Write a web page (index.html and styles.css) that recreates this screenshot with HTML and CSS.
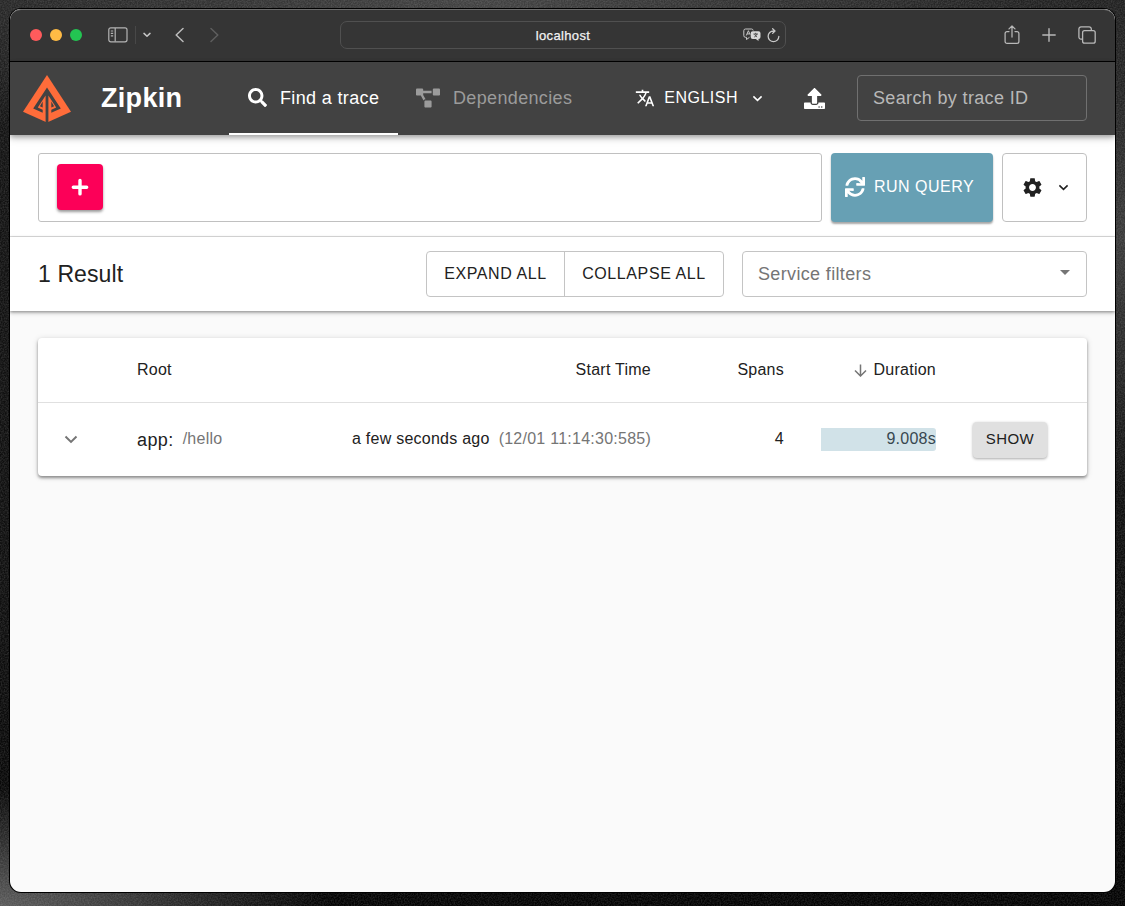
FILE: index.html
```html
<!DOCTYPE html>
<html lang="en">
<head>
    <meta charset="UTF-8">
    <meta name="viewport" content="width=device-width, initial-scale=1.0">
    <title>Zipkin</title>
    <link rel="stylesheet" href="styles.css">
</head>
<body>
    <!-- Desktop grain -->
    <svg class="grain" width="1125" height="906" aria-hidden="true">
        <filter id="noise" color-interpolation-filters="sRGB">
            <feTurbulence type="fractalNoise" baseFrequency="0.7" numOctaves="2"/>
            <feColorMatrix values="0 0 0 0 1  0 0 0 0 1  0 0 0 0 1  1 0 0 0 -0.3"/>
        </filter>
        <rect width="1125" height="906" filter="url(#noise)"/>
    </svg>

    <div class="window">
        <!-- Browser toolbar -->
        <div class="toolbar">
            <div class="toolbar-left">
                <span class="dot red"></span>
                <span class="dot yellow"></span>
                <span class="dot green"></span>
                <svg class="sidebar-icon" width="20" height="16" viewBox="0 0 20 16" fill="none" stroke="#b4b4b4" stroke-width="1.2">
                    <rect x="0.8" y="0.8" width="18.2" height="14" rx="2"/>
                    <path d="M7.2 1v13.6M2.8 4h2.4M2.8 6.4h2.4M2.8 8.8h2.4"/>
                </svg>
                <span class="divider"></span>
                <svg class="mini-chevron" width="8" height="6" viewBox="0 0 8 6" fill="none" stroke="#c4c4c4" stroke-width="1.5" stroke-linecap="round" stroke-linejoin="round">
                    <path d="M1 1.4l3 2.8 3-2.8"/>
                </svg>
                <svg class="back" width="9" height="16" viewBox="0 0 9 16" fill="none" stroke="#bcbcbc" stroke-width="1.5" stroke-linecap="round" stroke-linejoin="round">
                    <path d="M8 1.5L1.2 8 8 14.5"/>
                </svg>
                <svg class="forward" width="9" height="16" viewBox="0 0 9 16" fill="none" stroke="#5e5e5e" stroke-width="1.5" stroke-linecap="round" stroke-linejoin="round">
                    <path d="M1 1.5L7.8 8 1 14.5"/>
                </svg>
            </div>
            <div class="address">
                <span>localhost</span>
                <div class="address-icons">
                    <svg width="18" height="14" viewBox="0 0 18 14" fill="none">
                        <path d="M2.5 1h6a1.8 1.8 0 0 1 1.7 1.5M6.5 9.3L3.5 11.5V9.3h-1A1.7 1.7 0 0 1 .8 7.6V2.7A1.7 1.7 0 0 1 2.5 1" stroke="#c8c8c8"/>
                        <path d="M3.3 7.5l2.1-4.8 1.7 3.8M4 5.9h2.8" stroke="#c8c8c8"/>
                        <path d="M9.7 3.2h5.8a2 2 0 0 1 2 2v3.7a2 2 0 0 1-2 2v2.2l-2.7-2.2H9.7a2 2 0 0 1-2-2V5.2a2 2 0 0 1 2-2z" fill="#d8d8d8"/>
                        <path d="M10.4 6h4.6M12.7 4.8v1.2M11.2 9c1.6-.7 2.4-1.7 2.6-3M11.6 6.2c.5 1.4 1.5 2.3 2.5 2.8" stroke="#3a3a3a" stroke-width=".8"/>
                    </svg>
                    <svg width="13" height="15" viewBox="0 0 12 14" fill="none" stroke="#c8c8c8" stroke-width="1.2" stroke-linecap="round" stroke-linejoin="round">
                        <path d="M11 7.8a5 5 0 1 1-5-5h1M5.2.7l2.2 2.1-2.2 2.2"/>
                    </svg>
                </div>
            </div>
            <div class="toolbar-right">
                <svg width="16" height="20" viewBox="0 0 16 20" fill="none" stroke="#b8b8b8" stroke-width="1.25" stroke-linecap="round" stroke-linejoin="round">
                    <path d="M5 6.6H3A1.9 1.9 0 0 0 1.1 8.5v8A1.9 1.9 0 0 0 3 18.4h10a1.9 1.9 0 0 0 1.9-1.9v-8A1.9 1.9 0 0 0 13 6.6h-2M8 12V1.2M5 3.9l3-2.9 3 2.9"/>
                </svg>
                <svg width="14" height="14" viewBox="0 0 14 14" fill="none" stroke="#b8b8b8" stroke-width="1.4" stroke-linecap="round">
                    <path d="M7 .8v12.4M.8 7h12.4"/>
                </svg>
                <svg width="18" height="18" viewBox="0 0 18 18" fill="none" stroke="#b8b8b8" stroke-width="1.3">
                    <rect x="4.6" y="4.6" width="12.6" height="12.6" rx="2"/>
                    <path d="M4.6 13.2H3a2.1 2.1 0 0 1-2.1-2.1V3A2.1 2.1 0 0 1 3 .9h8.2a2.1 2.1 0 0 1 2.1 2.1v1.6"/>
                </svg>
            </div>
        </div>

        <!-- App bar -->
        <header class="app-bar">
            <svg class="logo" width="48" height="48" viewBox="0 0 48 48">
                <path fill="#ff6c3a" d="M24 0l24 36.800L24 47.500 0 36.800z"/>
                <path fill="#424242" d="M24 12.400L37.800 33.600 28.300 37.800V34.800L33.200 32.400 25.400 20.500V48h-2.800V20.500L14.800 32.400l4.900 2.400v3L10.200 33.600z"/>
                <path fill="#424242" d="M19.700 26.500V32.600L16.900 31.200zM28.300 26.500V32.600l2.800-1.400z"/>
            </svg>
            <h1 class="brand">Zipkin</h1>
            <nav class="tabs">
                <a class="tab active" href="#">
                    <svg width="19" height="19" viewBox="0 0 512 512" fill="currentColor"><path d="M505 442.700L405.300 343c-4.500-4.500-10.600-7-17-7H372c27.600-35.300 44-79.700 44-128C416 93.100 322.900 0 208 0S0 93.100 0 208s93.100 208 208 208c48.300 0 92.700-16.400 128-44v16.300c0 6.400 2.500 12.500 7 17l99.700 99.700c9.400 9.400 24.600 9.400 33.900 0l28.300-28.300c9.400-9.400 9.400-24.600.1-34zM208 336c-70.700 0-128-57.200-128-128 0-70.700 57.200-128 128-128 70.700 0 128 57.200 128 128 0 70.700-57.200 128-128 128z"/></svg>
                    <span>Find a trace</span>
                </a>
                <a class="tab" href="#">
                    <svg width="24" height="20" viewBox="0 0 640 512" fill="currentColor"><path d="M384 320H256c-17.670 0-32 14.330-32 32v128c0 17.670 14.330 32 32 32h128c17.670 0 32-14.330 32-32V352c0-17.670-14.330-32-32-32zM192 32c0-17.670-14.330-32-32-32H32C14.330 0 0 14.330 0 32v128c0 17.670 14.330 32 32 32h95.720l73.160 128.040C211.980 300.980 232.400 288 256 288h.280L192 175.510V128h224V64H192V32zM608 0H480c-17.670 0-32 14.330-32 32v128c0 17.670 14.330 32 32 32h128c17.670 0 32-14.330 32-32V32c0-17.670-14.330-32-32-32z"/></svg>
                    <span>Dependencies</span>
                </a>
            </nav>
            <button class="language">
                <svg width="20" height="20" viewBox="0 0 24 24" fill="currentColor"><path d="M12.870 15.070l-2.540-2.510.030-.030c1.740-1.940 2.980-4.170 3.710-6.530H17V4h-7V2H8v2H1v1.990h11.170C11.500 7.920 10.440 9.750 9 11.350 8.070 10.320 7.300 9.190 6.690 8h-2c.730 1.630 1.730 3.170 2.980 4.560l-5.090 5.020L4 19l5-5 3.110 3.110.760-2.040zM18.500 10h-2L12 22h2l1.120-3h4.750L21 22h2l-4.500-12zm-2.620 7l1.620-4.330L19.120 17h-3.240z"/></svg>
                <span>ENGLISH</span>
                <svg width="11" height="7" viewBox="0 0 12 8" fill="none" stroke="currentColor" stroke-width="1.800"><path d="M1.300 1.500L6 6.100l4.700-4.600"/></svg>
            </button>
            <svg class="upload" width="21" height="21" viewBox="0 0 512 512" fill="#fff"><path d="M296 384h-80c-13.300 0-24-10.700-24-24V192h-87.700c-17.800 0-26.700-21.500-14.100-34.100L242.300 5.700c7.500-7.500 19.800-7.500 27.300 0l152.200 152.200c12.600 12.600 3.700 34.100-14.100 34.100H320v168c0 13.300-10.700 24-24 24zm216-8v112c0 13.300-10.700 24-24 24H24c-13.300 0-24-10.700-24-24V376c0-13.300 10.700-24 24-24h136v8c0 30.900 25.100 56 56 56h80c30.900 0 56-25.100 56-56v-8h136c13.300 0 24 10.700 24 24zm-124 88c0-11-9-20-20-20s-20 9-20 20 9 20 20 20 20-9 20-20zm64 0c0-11-9-20-20-20s-20 9-20 20 9 20 20 20 20-9 20-20z"/></svg>
            <div class="trace-id">Search by trace ID</div>
        </header>

        <!-- Query -->
        <section class="query">
            <div class="criteria">
                <button class="add">
                    <svg width="18" height="18" viewBox="0 0 18 18" stroke="#fff" stroke-width="3.400" stroke-linecap="round"><path d="M9 2.500v13.400M2.300 9.200h13.400"/></svg>
                </button>
            </div>
            <button class="run">
                <svg width="20" height="20" viewBox="0 0 512 512" fill="currentColor"><path d="M440.650 12.570l4 82.770A247.160 247.160 0 0 0 255.830 8C134.730 8 33.910 94.920 12.290 209.820A12 12 0 0 0 24.090 224h49.050a12 12 0 0 0 11.670-9.260 175.910 175.910 0 0 1 317-56.940l-101.460-4.860a12 12 0 0 0-12.570 12v47.410a12 12 0 0 0 12 12H500a12 12 0 0 0 12-12V12a12 12 0 0 0-12-12h-47.370a12 12 0 0 0-11.980 12.570zM255.830 432a175.610 175.610 0 0 1-146-77.800l101.800 4.870a12 12 0 0 0 12.570-12v-47.400a12 12 0 0 0-12-12H12a12 12 0 0 0-12 12V500a12 12 0 0 0 12 12h47.350a12 12 0 0 0 12-12.600l-4.150-82.570A247.170 247.170 0 0 0 255.830 504c121.110 0 221.930-86.920 243.550-201.820a12 12 0 0 0-11.800-14.180h-49.050a12 12 0 0 0-11.670 9.260A175.860 175.860 0 0 1 255.830 432z"/></svg>
                <span>RUN QUERY</span>
            </button>
            <button class="settings">
                <svg width="23" height="23" viewBox="0 0 24 24" fill="currentColor"><path d="M19.140 12.940c.040-.300.060-.610.060-.940 0-.320-.020-.640-.070-.940l2.030-1.580c.180-.140.230-.410.120-.610l-1.920-3.320c-.120-.220-.370-.290-.590-.220l-2.390.960c-.500-.380-1.030-.700-1.620-.940l-.360-2.540c-.040-.240-.240-.410-.480-.410h-3.840c-.240 0-.430.170-.470.410l-.360 2.540c-.590.240-1.130.570-1.620.940l-2.390-.960c-.220-.080-.470 0-.590.220L2.740 8.870c-.120.210-.080.470.120.610l2.030 1.580c-.050.300-.090.630-.090.940s.020.640.070.940l-2.030 1.580c-.180.140-.230.410-.120.610l1.920 3.320c.120.220.370.290.590.220l2.390-.960c.500.380 1.030.700 1.620.940l.360 2.540c.050.240.240.410.480.410h3.840c.240 0 .440-.170.470-.410l.360-2.540c.590-.240 1.130-.560 1.620-.940l2.390.960c.220.080.470 0 .590-.220l1.920-3.320c.120-.220.070-.470-.120-.610l-2.010-1.580zM12 15.600c-1.980 0-3.600-1.620-3.600-3.600s1.620-3.600 3.600-3.600 3.600 1.620 3.600 3.600-1.620 3.600-3.600 3.600z"/></svg>
                <svg width="11" height="7" viewBox="0 0 12 8" fill="none" stroke="currentColor" stroke-width="1.800"><path d="M1.300 1.500L6 6.100l4.700-4.600"/></svg>
            </button>
        </section>

        <!-- Result count and filters -->
        <section class="results-bar">
            <h2>1 Result</h2>
            <div class="button-group">
                <button class="expand">EXPAND ALL</button>
                <button class="collapse">COLLAPSE ALL</button>
            </div>
            <div class="filters">
                <span>Service filters</span>
                <svg width="10" height="5" viewBox="0 0 10 5" fill="#757575"><path d="M0 0h10L5 5z"/></svg>
            </div>
        </section>

        <!-- Traces -->
        <main class="traces">
            <div class="row head">
                <span></span>
                <span>Root</span>
                <span class="right">Start Time</span>
                <span class="right">Spans</span>
                <span class="right sorted">
                    <svg width="13" height="13" viewBox="0 0 13 13" fill="none" stroke="#757575" stroke-width="1.500"><path d="M6.500.5v11.300M1 6.500L6.500 12 12 6.500"/></svg>
                    Duration
                </span>
                <span></span>
            </div>
            <div class="row trace">
                <svg class="toggle" width="14" height="9" viewBox="0 0 14 9" fill="none" stroke="#757575" stroke-width="2"><path d="M1.500 1.500L7 6.900l5.500-5.400"/></svg>
                <span class="root"><span class="service">app:</span><span class="path">/hello</span></span>
                <span class="right start">a few seconds ago<span class="time">(12/01 11:14:30:585)</span></span>
                <span class="right count">4</span>
                <span class="duration">9.008s</span>
                <button class="show">SHOW</button>
            </div>
        </main>
    </div>
</body>
</html>
```
FILE: styles.css
```css
* {
    box-sizing: border-box;
}
body {
    margin: 0;
    height: 906px;
    padding: 9px 10px 14px;
    overflow: hidden;
    font-family: "Liberation Sans", Arial, sans-serif;
    color: #212121;
    background:
        radial-gradient(ellipse 330px 120px at 0 906px, #5a5a5a, transparent),
        radial-gradient(ellipse 200px 260px at 1125px 240px, #3a3a3a, transparent),
        radial-gradient(ellipse 800px 160px at 480px 0, #424242, transparent),
        linear-gradient(#141414, #0e0e0e 70%, #020202);
}
.grain {
    position: absolute;
    top: 0;
    left: 0;
    opacity: 0.24;
}
button {
    font-family: inherit;
    color: inherit;
    background: none;
    border: none;
    padding: 0;
}
svg {
    flex: none;
}
.window {
    position: relative;
    height: 883px;
    background-color: #fafafa;
    border-radius: 11px;
    overflow: hidden;
    box-shadow: 0 0 0 1px #000;
}

/* Browser toolbar */
.toolbar {
    display: grid;
    grid-template-columns: 330px 446px 1fr;
    align-items: center;
    height: 53px;
    padding-bottom: 2px;
    background-color: #353535;
    border-top: 1px solid #6c6c6c;
    border-bottom: 1px solid #000;
    border-radius: 11px 11px 0 0;
}
.toolbar-left {
    display: flex;
    align-items: center;
    padding-left: 20px;
}
.dot {
    width: 12px;
    height: 12px;
    margin-right: 8px;
    border-radius: 50%;
}
.red {
    background-color: #ff5b5c;
}
.yellow {
    background-color: #ffbb45;
}
.green {
    background-color: #23c552;
}
.sidebar-icon {
    margin-left: 18px;
}
.divider {
    width: 1px;
    height: 18px;
    margin: 0 7px;
    background-color: #484848;
}
.back {
    margin-left: 24px;
}
.forward {
    margin-left: 26px;
}
.address {
    position: relative;
    height: 28px;
    border: 1px solid #505050;
    border-radius: 7px;
    color: #f2f2f2;
    font-size: 13px;
    letter-spacing: 0.35px;
    line-height: 27px;
    text-align: center;
    -webkit-text-stroke: 0.25px #f2f2f2;
}
.address-icons {
    position: absolute;
    top: 6px;
    right: 5px;
    display: flex;
    gap: 6px;
}
.toolbar-right {
    display: flex;
    align-items: center;
    justify-content: flex-end;
    gap: 22px;
    padding-right: 19px;
}

/* App bar */
.app-bar {
    position: relative;
    z-index: 2;
    display: flex;
    align-items: center;
    height: 73px;
    padding: 0 28px 1px 13px;
    background-color: #424242;
    color: #fff;
    box-shadow: 0 2px 5px rgba(0, 0, 0, 0.3), 0 4px 8px rgba(0, 0, 0, 0.12);
}
.logo {
    margin-top: 2px;
}
.brand {
    width: 128px;
    margin: 0 0 0 30px;
    font-size: 27px;
    letter-spacing: 0.3px;
    line-height: 36px;
}
.tabs {
    display: flex;
    align-self: stretch;
    margin-bottom: -1px;
}
.tab {
    display: flex;
    align-items: center;
    gap: 13px;
    padding: 0 19px 0 18px;
    border-bottom: 2px solid transparent;
    color: #9b9b9b;
    font-size: 18px;
    letter-spacing: 0.35px;
    text-decoration: none;
    white-space: nowrap;
}
.tab span {
    padding-top: 2px;
}
.active {
    width: 169px;
    padding-left: 19px;
    color: #fff;
    border-bottom-color: #fff;
}
.language {
    display: flex;
    align-items: center;
    margin-left: 44px;
    font-size: 16px;
    letter-spacing: 0.5px;
}
.language span {
    margin: 0 14px 0 9px;
}
.upload {
    margin-left: auto;
}
.trace-id {
    width: 230px;
    height: 46px;
    margin-left: 32px;
    padding-left: 15px;
    border: 1px solid #707070;
    border-radius: 4px;
    color: #b8b8b8;
    font-size: 18px;
    letter-spacing: 0.35px;
    line-height: 44px;
}

/* Query */
.query {
    display: flex;
    gap: 9px;
    height: 102px;
    padding: 18px 28px 14px;
    background-color: #fff;
    border-bottom: 1px solid #e0e0e0;
}
.criteria {
    flex: 1;
    height: 69px;
    padding: 10px 18px;
    border: 1px solid #c0c0c0;
    border-radius: 3px;
}
.add {
    display: flex;
    align-items: center;
    justify-content: center;
    width: 46px;
    height: 46px;
    background-color: #fc0058;
    border-radius: 4px;
    box-shadow: 0 2px 3px rgba(0, 0, 0, 0.4);
}
.run {
    display: flex;
    align-items: center;
    gap: 9px;
    width: 162px;
    height: 69px;
    padding: 0 0 1px 14px;
    background-color: #67a0b4;
    border-radius: 4px;
    color: #fff;
    font-size: 16px;
    letter-spacing: 0.5px;
    box-shadow: 0 2px 2px rgba(0, 0, 0, 0.35);
}
.settings {
    display: flex;
    align-items: center;
    justify-content: center;
    gap: 14px;
    width: 85px;
    height: 69px;
    padding: 0 0 1px 1px;
    border: 1px solid #c0c0c0;
    border-radius: 4px;
}

/* Results bar */
.results-bar {
    position: relative;
    display: flex;
    align-items: center;
    height: 74px;
    padding: 0 28px;
    background-color: #fff;
    box-shadow: 0 1px 3px rgba(0, 0, 0, 0.4), 0 3px 4px rgba(0, 0, 0, 0.1);
}
.results-bar h2 {
    margin: 0 auto 0 0;
    font-size: 23px;
    font-weight: normal;
    letter-spacing: 0.1px;
}
.button-group {
    display: flex;
    width: 298px;
    height: 46px;
    margin-right: 18px;
    border: 1px solid #c4c4c4;
    border-radius: 4px;
}
.button-group button {
    font-size: 16px;
    letter-spacing: 0.6px;
}
.expand {
    width: 138px;
    border-right: 1px solid #c4c4c4;
}
.collapse {
    flex: 1;
}
.filters {
    display: flex;
    align-items: center;
    justify-content: space-between;
    width: 345px;
    height: 46px;
    padding: 0 16px 0 15px;
    border: 1px solid #c4c4c4;
    border-radius: 4px;
    color: #757575;
    font-size: 18px;
    letter-spacing: 0.35px;
}
.filters svg {
    margin-top: -4px;
}

/* Traces */
.traces {
    margin: 27px 28px 0;
    background-color: #fff;
    border-radius: 4px;
    box-shadow: 0 2px 3px rgba(0, 0, 0, 0.38), 0 1px 6px rgba(0, 0, 0, 0.15);
    font-size: 16px;
    letter-spacing: 0.25px;
}
.row {
    display: grid;
    grid-template-columns: 99px 170px 344px 133px 152px 1fr;
    align-items: center;
}
.head {
    height: 65px;
    border-bottom: 1px solid #e0e0e0;
}
.trace {
    height: 73px;
}
.right {
    text-align: right;
}
.sorted {
    display: flex;
    align-items: center;
    justify-content: flex-end;
    gap: 7px;
}
.toggle {
    margin-left: 26px;
}
.root {
    display: flex;
    align-items: center;
    gap: 9px;
}
.service {
    padding-top: 2px;
    font-size: 18px;
    letter-spacing: 0.4px;
}
.path, .time {
    color: #757575;
}
.path, .start, .count {
    padding-bottom: 2px;
}
.time {
    margin-left: 9px;
}
.duration {
    width: 115px;
    height: 23px;
    margin-left: auto;
    background-color: #d1e2e8;
    border-radius: 0 3px 3px 0;
    color: #37474f;
    line-height: 22px;
    text-align: right;
}
.show {
    width: 74px;
    height: 36px;
    margin-left: 37px;
    padding-bottom: 2px;
    background-color: #e0e0e0;
    border-radius: 4px;
    font-size: 15px;
    letter-spacing: 0.45px;
    box-shadow: 0 1px 3px rgba(0, 0, 0, 0.35);
}
```
